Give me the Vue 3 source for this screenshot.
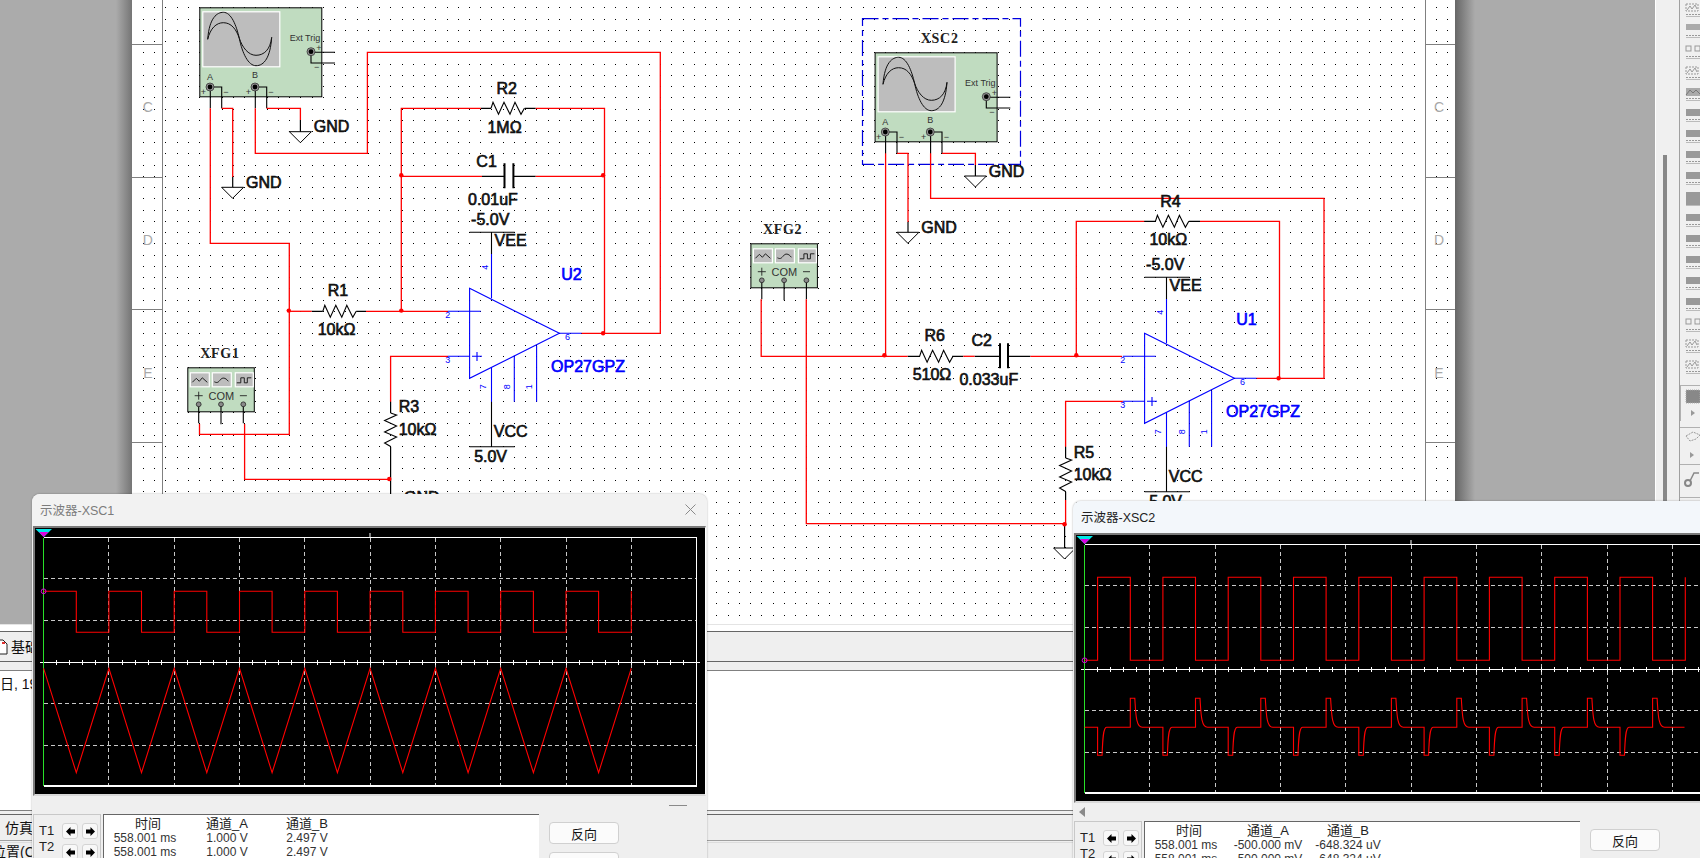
<script setup>
// half a division of the scope grid, every trace edge sits on this step
const STEP = 32.65;
const X0 = 8.6;

function squarePath() {
  let d = `M${X0} 63.3`;
  for (let k = 1; k <= 18; k++) {
    const x = (X0 + k * STEP).toFixed(1);
    if (k === 18) d += ` H${x} V63.3`;
    else d += ` H${x} V${k % 2 ? 104.3 : 63.3}`;
  }
  return d;
}

function trianglePath() {
  let d = `M${X0} 140.3`;
  for (let k = 1; k <= 18; k++) {
    d += ` L${(X0 + k * STEP).toFixed(1)} ${k % 2 ? 244.7 : 140.3}`;
  }
  return d;
}

function pulsePath() {
  let d = `M${X0} 125.3`;
  for (let k = 0; k <= 18; k++) {
    const x = (21.6 + k * STEP).toFixed(1);
    d += ` H${x} V${k % 2 ? 125.3 : 42.3}`;
  }
  return d;
}

function spikePath() {
  let d = `M${X0} 192.3`;
  for (let k = 0; k < 18; k++) {
    const x = 21.6 + k * STEP;
    if (k % 2 === 0) {
      d += ` H${x.toFixed(1)} V220.3 h4.5 C${(x + 5).toFixed(1)} 205 ${(x + 5.5).toFixed(1)} 192.3 ${(x + 9).toFixed(1)} 192.3`;
    } else {
      d += ` H${x.toFixed(1)} V163.3 h4.5 C${(x + 5.5).toFixed(1)} 178 ${(x + 5.5).toFixed(1)} 192.3 ${(x + 12).toFixed(1)} 192.3`;
    }
  }
  return d + ' H608.5';
}

const vGrid = [];
for (let i = 1; i <= 9; i++) vGrid.push((X0 + i * 65.3).toFixed(1));
const hGrid = [50.3, 92.3, 175.3, 217.3];
const ticks = [];
for (let i = 0; i <= 50; i++) ticks.push((X0 + i * 13.06).toFixed(1));

const scopes = [
  {
    id: 'win-one',
    title: '示波器-XSC1',
    traces: [squarePath(), trianglePath()],
    markerY: 63.3,
    rows: [
      ['558.001 ms', '1.000 V', '2.497 V'],
      ['558.001 ms', '1.000 V', '2.497 V'],
    ],
  },
  {
    id: 'win-two',
    title: '示波器-XSC2',
    traces: [pulsePath(), spikePath()],
    markerY: 125.3,
    rows: [
      ['558.001 ms', '-500.000 mV', '-648.324 uV'],
      ['558.001 ms', '-500.000 mV', '-648.324 uV'],
    ],
  },
];

// sheet grid dots
let dots = '';
for (let x = 142.9; x < 1455; x += 11.245) {
  for (let y = 7.3; y < 622; y += 11.245) {
    dots += `M${Math.round(x)} ${Math.round(y) + 0.5}h1`;
  }
}

const sheetTicks = [44.3, 177.3, 309.3, 442.3];
const sheetLetters = [
  { t: 'C', y: 107.3 },
  { t: 'D', y: 240 },
  { t: 'E', y: 372.7 },
];

const redWires = [
  'M210.3 108.3V243.3H289.3V434.3H199.5V424',
  'M221.7 108.3H232.7V177',
  'M255.3 108.3V153.3H367.4V52.3H660.3V333.3H581.7',
  'M266.7 108.3H300.4V120',
  'M289.3 311.3H311.6',
  'M366 311.3H447.8',
  'M401.3 311.3V108.3H480.8',
  'M535.7 108.3H604.5V333.3',
  'M401.3 176.3H482',
  'M535.7 176.3H604.5',
  'M447.8 356.3H390.6V401.7',
  'M244.6 424V479.3H390.6',
  'M885.6 153.3V356.3',
  'M897 153.3H908V222',
  'M930.6 153.3V198.3H1324V378.3H1256.7',
  'M942 153.3H975.4V165',
  'M761.2 299.3V356.3H907.6',
  'M963.4 356.3H974.6',
  'M1030.4 356.3H1121.9',
  'M1076.3 356.3V221.3H1144.2',
  'M1200 221.3H1279.5V378.3',
  'M806.3 299.3V523.7H1064.6',
  'M1122.8 401.3H1065.6V446.7',
  'M1065.6 500V524',
];

const blackWires = [
  'M232.7 177V187.3',
  'M300.4 120V131.7',
  'M975.4 165V176',
  'M908 222V232.3',
  'M390.6 401.7V413M390.6 446.7V494',
  'M1065.6 446.7V458M1065.6 491.7V500',
  'M1064.6 524V548',
  'M311.6 311.3H322.8M356.2 311.3H366',
  'M480.8 108.3H491M524.6 108.3H535.7',
  'M482 176.3H504.5M513.4 176.3H535.7',
  'M907.6 356.3H919.6M952.2 356.3H963.4',
  'M974.6 356.3H1000M1008 356.3H1030.4',
  'M1144.2 221.3H1155.4M1188.8 221.3H1200',
];

const plates = 'M504.5 163.3V188.3M513.4 163.3V188.3M1000 343.3V368.3M1008 343.3V368.3';

const nodes = [
  [288.8, 310.6], [401.3, 310.6], [401.3, 175.3], [603.1, 175.3], [603.1, 333.3], [389.3, 479],
  [884.4, 355.3], [1076.3, 355.3], [1278.6, 378.3], [1064.6, 524.3],
];

const grounds = [
  [232.6, 187.3], [300.4, 131.7], [907.9, 232.3], [975.4, 176], [1064.6, 548], [390.6, 520],
];

const resistors = [
  'translate(322.8 311.3)',
  'translate(491 108.3)',
  'translate(919.6 356.3)',
  'translate(1155.4 221.3)',
  'translate(390.6 413) rotate(90)',
  'translate(1065.6 458) rotate(90)',
];

const labels = [
  { t: 'GND', x: 246, y: 182 },
  { t: 'GND', x: 313.8, y: 126 },
  { t: 'GND', x: 921.3, y: 227 },
  { t: 'GND', x: 988.8, y: 171 },
  { t: 'GND', x: 404, y: 497 },
  { t: 'R1', x: 338, y: 290.7, mid: true },
  { t: '10kΩ', x: 336.6, y: 329.3, mid: true },
  { t: 'R2', x: 506.7, y: 88.3, mid: true },
  { t: '1MΩ', x: 504.5, y: 127, mid: true },
  { t: 'C1', x: 486.6, y: 161, mid: true },
  { t: '0.01uF', x: 492.9, y: 199.3, mid: true },
  { t: 'R3', x: 398.7, y: 406.7 },
  { t: '10kΩ', x: 398.7, y: 429.3 },
  { t: 'R4', x: 1170.5, y: 201, mid: true },
  { t: '10kΩ', x: 1168.3, y: 239.3, mid: true },
  { t: 'R6', x: 934.8, y: 335.7, mid: true },
  { t: '510Ω', x: 932, y: 374.7, mid: true },
  { t: 'C2', x: 981.7, y: 340.7, mid: true },
  { t: '0.033uF', x: 988.8, y: 379, mid: true },
  { t: 'R5', x: 1073.7, y: 452 },
  { t: '10kΩ', x: 1073.7, y: 474.3 },
];

const amps = [
  { at: 'translate(0 0)', name: 'U2' },
  { at: 'translate(675 45)', name: 'U1' },
];
const pinNums = [
  { t: '2', x: 447.8, y: 314.7 },
  { t: '3', x: 447.8, y: 359.7 },
  { t: '6', x: 567.4, y: 337.3 },
];
const pinRotated = [
  { t: '4', x: 485.3, y: 267.3 },
  { t: '7', x: 483, y: 386.7 },
  { t: '8', x: 506.7, y: 386.7 },
  { t: '1', x: 529.5, y: 386.7 },
];

const oscs = ['translate(199.3 7.3)', 'translate(874.6 52.3)'];
const gens = ['translate(187.3 367.3)', 'translate(750.4 243.3)'];

const toolIcons = ['hatch', 'dots', 'boxes', 'hatch', 'wave', 'solid', 'solid', 'solid', 'solid', 'big', 'solid', 'solid', 'solid', 'solid', 'solid', 'boxes', 'hatch', 'hatch'];
</script>

<template>
  <div class="desk">
    <div class="workspace">
      <div class="gutter gutter-left"></div>

      <svg class="sheet" width="1323" height="624" viewBox="132 0 1323 624">
        <rect x="132" y="0" width="1323" height="624" fill="#fff" />
        <path :d="dots" stroke="#000" stroke-width="1" shape-rendering="crispEdges" />

        <g stroke="#808080" stroke-width="1" shape-rendering="crispEdges">
          <line x1="162.5" y1="0" x2="162.5" y2="620" />
          <line x1="1425.5" y1="0" x2="1425.5" y2="620" />
          <template v-for="y in sheetTicks" :key="y">
            <line x1="132" :y1="y" x2="162" :y2="y" />
            <line x1="1426" :y1="y" x2="1455" :y2="y" />
          </template>
        </g>
        <template v-for="l in sheetLetters" :key="l.t">
          <text class="sheet-letter" x="147.8" :y="l.y">{{ l.t }}</text>
          <text class="sheet-letter" x="1439" :y="l.y">{{ l.t }}</text>
        </template>

        <!-- selection box round XSC2 -->
        <rect x="862.5" y="18.7" width="158" height="145.6" fill="none" stroke="#0000e0" stroke-width="1.2" stroke-dasharray="16 4 6 4" />
        <text class="ref-label" x="939.7" y="38.3">XSC2</text>
        <text class="ref-label" x="220" y="353.3">XFG1</text>
        <text class="ref-label" x="782.6" y="229.3">XFG2</text>

        <!-- oscilloscope symbols -->
        <g v-for="o in oscs" :key="o" :transform="o">
          <rect x="0.5" y="0.5" width="122" height="89" fill="#c0dcc0" stroke="#000" stroke-width="1" />
          <rect x="3.5" y="4.5" width="77" height="55" fill="#bdbdbd" stroke="#fff" stroke-width="1.2" />
          <path d="M8.4 32C10 10 18 5 24 5C32 5 37 18 40 31C43 46 49 58.4 56.7 58.4C65 58.4 71 50 72.4 30" fill="none" stroke="#111" stroke-width="1" />
          <path d="M8.4 32C11 21 17 15.4 24 15.4C32 15.4 37 22 40 31C43 40 49 48 56.7 48C65 48 71 42 72.4 30" fill="none" stroke="#111" stroke-width="1" />
          <text class="osc-text" x="105.7" y="30.4">Ext Trig</text>
          <text class="osc-text" x="10.7" y="69.4">A</text>
          <text class="osc-text" x="55.7" y="68">B</text>
          <text class="osc-text" x="119.7" y="41">+</text>
          <text class="osc-text" x="117.4" y="59.7">−</text>
          <text class="osc-text" x="4" y="85">+</text>
          <text class="osc-text" x="26.7" y="85">−</text>
          <text class="osc-text" x="49" y="85">+</text>
          <text class="osc-text" x="71.7" y="85">−</text>
          <path d="M111.7 45H135.7M111.7 45V55.7H135.7M11 79.7V101M11 79.7H22.4V101M56 79.7V101M56 79.7H67.4V101" fill="none" stroke="#000" stroke-width="1.1" />
          <g v-for="c in [[111.7, 44.4], [10.7, 79.7], [55.7, 79.7]]" :key="c[0]">
            <circle :cx="c[0]" :cy="c[1]" r="4" fill="#999" stroke="#333" stroke-width="0.8" />
            <circle :cx="c[0]" :cy="c[1]" r="2.4" fill="#000" />
          </g>
        </g>

        <!-- function generator symbols -->
        <g v-for="g in gens" :key="g" :transform="g">
          <rect x="0.5" y="0.5" width="66.5" height="44" fill="#c0dcc0" stroke="#000" stroke-width="1" />
          <rect x="3" y="5.5" width="19" height="14" fill="#bdbdbd" stroke="#fff" stroke-width="1.2" />
          <rect x="25" y="5.5" width="19" height="14" fill="#bdbdbd" stroke="#fff" stroke-width="1.2" />
          <rect x="48" y="5.5" width="18" height="14" fill="#bdbdbd" stroke="#fff" stroke-width="1.2" />
          <path d="M5 15L9 11L12 14L15 10.5L20 15" fill="none" stroke="#111" stroke-width="0.9" />
          <path d="M27 14.5C30 16 31 15 33 12.5C35 10 38 10 41 14" fill="none" stroke="#111" stroke-width="0.9" />
          <path d="M49.5 15.5H53.5V10.5H57V15.5H60V10.5H64" fill="none" stroke="#111" stroke-width="0.9" />
          <path d="M7.4 28.4H15.4M11.4 24.4V32.4M52.6 28.4H59.6" fill="none" stroke="#222" stroke-width="0.9" />
          <text class="gen-text" x="34" y="28.6">COM</text>
          <path d="M11.4 37V56M33.7 37V57M56 37V56" fill="none" stroke="#000" stroke-width="1.1" />
          <circle v-for="x in [11.4, 33.7, 56]" :key="x" :cx="x" cy="37" r="2.4" fill="#8a8a8a" stroke="#222" stroke-width="0.8" />
        </g>

        <!-- op amps, the second one sits at a fixed offset from the first -->
        <g v-for="a in amps" :key="a.name" :transform="a.at">
          <path d="M491.5 232.3V254M469.6 232.3H514.7M491.5 401.7V446.7M469.6 446.7H514.7" fill="none" stroke="#000" stroke-width="1.1" />
          <path d="M469.6 288.3L559.4 333.3L469.6 378.3Z" fill="none" stroke="#0000ff" stroke-width="1.1" />
          <path d="M491.5 254V298.3M447.8 311.3H480.8M447.8 356.3H469.6M472 356.3H482M477 352V361M559.4 333.3H581.7M491.5 367V401.7M514.3 355.7V401.7M536.6 345.7V401.7" fill="none" stroke="#0000ff" stroke-width="1.1" />
          <text v-for="p in pinNums" :key="p.t" class="pin-num" :x="p.x" :y="p.y">{{ p.t }}</text>
          <text v-for="p in pinRotated" :key="p.t" class="pin-num" :transform="`rotate(-90 ${p.x} ${p.y})`" :x="p.x" :y="p.y">{{ p.t }}</text>
          <text class="part-label" x="571.4" y="274.3">{{ a.name }}</text>
          <text class="part-label" x="588" y="366.7">OP27GPZ</text>
          <text class="sch-text mid" x="490.2" y="219.3">-5.0V</text>
          <text class="sch-text" x="494.6" y="240.7">VEE</text>
          <text class="sch-text" x="493.8" y="431.7">VCC</text>
          <text class="sch-text mid" x="490.6" y="456.7">5.0V</text>
        </g>

        <path v-for="r in resistors" :key="r" :transform="r" d="M0 0L2 -6L7.5 6L13 -6L19 6L24 -6L30 6L33.4 0" fill="none" stroke="#000" stroke-width="1.1" />
        <path v-for="(w, i) in blackWires" :key="'b' + i" :d="w" fill="none" stroke="#000" stroke-width="1.2" />
        <path :d="plates" fill="none" stroke="#000" stroke-width="2" />
        <path v-for="(w, i) in redWires" :key="'r' + i" :d="w" fill="none" stroke="#f00" stroke-width="1.3" />
        <path v-for="g in grounds" :key="g[0]" :d="`M${g[0] - 11} ${g[1]}H${g[0] + 11}L${g[0]} ${g[1] + 11}Z`" fill="#fff" stroke="#000" stroke-width="1" />
        <circle v-for="n in nodes" :key="n[0] + '-' + n[1]" :cx="n[0]" :cy="n[1]" r="2.2" fill="#f00" />
        <text v-for="l in labels" :key="l.t + l.x" class="sch-text" :class="{ mid: l.mid }" :x="l.x" :y="l.y">{{ l.t }}</text>
      </svg>

      <div class="gutter gutter-right"></div>

      <aside class="side-panel">
        <div class="scroll-track"><div class="scroll-thumb"></div></div>
        <div class="tool-column">
          <svg v-for="(t, i) in toolIcons" :key="i" class="tool-icon" width="15" height="14" viewBox="0 0 15 14">
            <rect v-if="t === 'solid'" x="1" y="1" width="14" height="7" fill="#999" />
            <rect v-if="t === 'big'" x="1" y="0" width="14" height="14" fill="#999" />
            <rect v-if="t === 'hatch'" x="1" y="1" width="12" height="7" fill="none" stroke="#999" stroke-dasharray="2 1" />
            <path v-if="t === 'hatch'" d="M2 7L5 3L7 6L10 2L12 6" fill="none" stroke="#999" />
            <rect v-if="t === 'wave'" x="1" y="1" width="14" height="8" fill="#aaa" />
            <path v-if="t === 'wave'" d="M1 8L5 3L8 6L11 3L15 7" fill="none" stroke="#777" />
            <template v-if="t === 'boxes'">
              <rect x="1" y="1" width="5" height="5" fill="none" stroke="#999" />
              <rect x="10" y="1" width="5" height="5" fill="none" stroke="#999" />
            </template>
            <path v-if="t === 'dots'" d="M1 0H15V6H1Z" fill="#aaa" />
            <path d="M1 11.5H15" stroke="#999" stroke-dasharray="2 1" />
            <path d="M1 13.5H15" stroke="#bbb" />
          </svg>
          <div class="tool-big">
            <svg width="15" height="15" viewBox="0 0 15 15">
              <rect x="1" y="1" width="14" height="13" fill="#888" stroke="#aaa" stroke-dasharray="1 1" />
            </svg>
            <span class="tool-arrow"></span>
          </div>
          <div class="tool-big tool-plain">
            <svg width="15" height="15" viewBox="0 0 15 15">
              <path d="M1 5L8 1L15 4L11 8L5 10Z" fill="none" stroke="#999" stroke-dasharray="2 1" />
            </svg>
            <span class="tool-arrow"></span>
          </div>
          <div class="tool-probe">
            <svg width="15" height="18" viewBox="0 0 15 18">
              <circle cx="4" cy="13" r="3" fill="none" stroke="#888" stroke-width="2" />
              <path d="M6 11L10 3H15" fill="none" stroke="#888" stroke-width="1.5" />
            </svg>
          </div>
        </div>
      </aside>
    </div>

    <div class="dock">
      <div class="dock-gap"></div>
      <div class="dock-tabs">
        <svg class="doc-icon" width="8" height="16" viewBox="0 0 8 16">
          <path d="M-3 1H3L7 5V15H-3Z" fill="#fff" stroke="#222" />
          <path d="M2 3H5V5H2Z" fill="#e03030" />
        </svg>
        <span>基础</span>
      </div>
      <div class="dock-spacer"></div>
      <div class="dock-log">日, 19</div>
      <div class="dock-thin"></div>
      <div class="dock-tabs dock-sim"><span>仿真</span></div>
      <div class="dock-last"><span>位置(C</span></div>
    </div>

    <section v-for="s in scopes" :key="s.id" class="scope-window" :class="s.id">
      <header class="scope-title">
        <span>{{ s.title }}</span>
        <svg class="close-x" width="11" height="11" viewBox="0 0 11 11">
          <path d="M0.5 0.5L10.5 10.5M10.5 0.5L0.5 10.5" stroke="currentColor" stroke-width="1" />
        </svg>
      </header>

      <div class="scope-screen">
        <svg width="670" height="266" viewBox="0 0 670 266">
          <g stroke="#c8c8c8" stroke-width="1" stroke-dasharray="4 3" shape-rendering="crispEdges">
            <line v-for="x in vGrid" :key="x" :x1="x" y1="9.7" :x2="x" y2="258" />
            <line v-for="y in hGrid" :key="y" x1="8.6" :y1="y" x2="661" :y2="y" />
          </g>
          <line x1="335" y1="5" x2="335" y2="10" stroke="#fff" />
          <g stroke="#fff" stroke-width="1" shape-rendering="crispEdges">
            <line x1="5.4" y1="134.5" x2="664.7" y2="134.5" />
            <line v-for="x in ticks" :key="x" :x1="x" y1="132" :x2="x" y2="137" />
          </g>
          <path d="M8.6 9.7H661.5V258H8.6" fill="none" stroke="#fff" stroke-width="1.2" shape-rendering="crispEdges" />
          <line x1="8.6" y1="9.7" x2="8.6" y2="258" stroke="#28e028" stroke-width="1" shape-rendering="crispEdges" />
          <path v-for="(t, i) in s.traces" :key="i" :d="t" fill="none" stroke="#f00" stroke-width="1.1" />
          <path d="M0.5 1H17L8.7 9Z" fill="#00e8e8" />
          <path d="M4 4H13.5L8.7 9Z" fill="#e000e0" />
          <circle cx="8.6" :cy="s.markerY" r="2.4" fill="none" stroke="#e000e0" stroke-width="1" />
        </svg>
      </div>

      <div class="scope-strip">
        <span v-if="s.id === 'win-one'" class="strip-dash"></span>
        <span v-else class="strip-arrow"></span>
      </div>

      <div class="scope-controls">
        <div class="cursor-box">
          <div class="cursor-names"><span>T1</span><span>T2</span></div>
          <div class="cursor-buttons">
            <button v-for="b in ['l1', 'r1', 'l2', 'r2']" :key="b" class="arrow-btn">
              <svg width="9" height="9" viewBox="0 0 9 9">
                <path v-if="b[0] === 'l'" d="M0 4.5L4.5 0V2.5H9V6.5H4.5V9Z" fill="#000" />
                <path v-else d="M9 4.5L4.5 0V2.5H0V6.5H4.5V9Z" fill="#000" />
              </svg>
            </button>
          </div>
        </div>
        <div class="readout">
          <div class="readout-row readout-head">
            <span class="first">时间</span><span>通道_A</span><span>通道_B</span>
          </div>
          <div v-for="(r, i) in s.rows" :key="i" class="readout-row">
            <span v-for="c in r" :key="c">{{ c }}</span>
          </div>
        </div>
        <div class="scope-buttons">
          <button class="flat-btn">反向</button>
          <button class="flat-btn"></button>
        </div>
      </div>
    </section>
  </div>
</template>

<style>
html, body {
  margin: 0;
  overflow: hidden;
}
</style>

<style scoped>
.desk {
  position: relative;
  width: 1700px;
  height: 858px;
  overflow: hidden;
  display: flex;
  flex-direction: column;
  font-family: "Liberation Sans", "Noto Sans CJK SC", sans-serif;
  background: #efefef;
}

.workspace {
  height: 624px;
  display: flex;
  background: #ababab;
}

.gutter {
  height: 100%;
}

.gutter-left {
  width: 132px;
  background: linear-gradient(to right, #ababab 0, #ababab 116px, #757575 132px);
}

.gutter-right {
  width: 200px;
  background: linear-gradient(to right, #666 0, #ababab 20px);
}

.sheet {
  display: block;
  flex: none;
}

.sheet-letter {
  font-size: 14px;
  fill: #a8a8a8;
  text-anchor: middle;
  dominant-baseline: central;
}

.ref-label {
  font-family: "Liberation Serif", serif;
  font-size: 14px;
  font-weight: 700;
  letter-spacing: 0.7px;
  fill: #222;
  text-anchor: middle;
  dominant-baseline: central;
}

.osc-text {
  font-size: 9px;
  fill: #333;
  text-anchor: middle;
  dominant-baseline: central;
}

.gen-text {
  font-size: 11px;
  fill: #333;
  text-anchor: middle;
  dominant-baseline: central;
}

.pin-num {
  font-size: 9px;
  fill: #0000ff;
  text-anchor: middle;
  dominant-baseline: central;
}

/* the labels in the reference are scaled up and look half bold, hence the thin stroke */
.part-label {
  font-size: 16px;
  fill: #0000ff;
  stroke: #0000ff;
  stroke-width: 0.65px;
  text-anchor: middle;
  dominant-baseline: central;
}

.sch-text {
  font-size: 16px;
  fill: #111;
  stroke: #111;
  stroke-width: 0.65px;
  dominant-baseline: central;
}

.sch-text.mid {
  text-anchor: middle;
}

.side-panel {
  flex: 1;
  display: flex;
  background: #f0f0f0;
  border-left: 1px solid #fff;
}

.scroll-track {
  width: 23px;
  border-right: 1px solid #a0a0a0;
}

.scroll-thumb {
  width: 4px;
  height: 470px;
  margin: 155px 0 0 7px;
  background: #888;
}

.tool-column {
  display: flex;
  flex-direction: column;
  padding-top: 3px;
  width: 20px;
}

.tool-icon {
  display: block;
  flex: none;
  margin: 0 0 7px 5px;
}

.tool-big {
  display: flex;
  flex-direction: column;
  align-items: center;
  gap: 6px;
  height: 32px;
  margin-top: 4px;
  padding: 3px 0 0 4px;
  border-top: 1px solid #b0b0b0;
  border-left: 1px solid #b0b0b0;
}

.tool-plain {
  border-left: none;
  margin-top: 6px;
  height: 30px;
}

.tool-arrow {
  width: 0;
  height: 0;
  border-left: 4px solid #999;
  border-top: 3px solid transparent;
  border-bottom: 3px solid transparent;
}

.tool-probe {
  height: 27px;
  margin-top: 3px;
  padding: 5px 0 0 4px;
  border-top: 1px solid #b0b0b0;
  border-bottom: 1px solid #b0b0b0;
}

.dock {
  flex: 1;
  display: flex;
  flex-direction: column;
  font-size: 14px;
  color: #111;
}

.dock-gap {
  height: 7px;
  background: #fff;
  border-top: 1px solid #e4e4e4;
  box-sizing: border-box;
}

.dock-tabs {
  height: 31px;
  box-sizing: border-box;
  border-top: 1px solid #666;
  border-bottom: 1px solid #666;
  display: flex;
  align-items: center;
  gap: 3px;
  background: #efefef;
}

.dock-tabs span {
  line-height: 1;
}

.doc-icon {
  display: block;
}

.dock-spacer {
  height: 8px;
  border-bottom: 1px solid #808080;
}

.dock-log {
  height: 139px;
  background: #fff;
  padding-top: 5px;
  box-sizing: border-box;
  line-height: 17px;
  font-size: 14px;
}

.dock-thin {
  height: 4px;
  border-top: 1px solid #808080;
  box-sizing: border-box;
}

.dock-sim {
  height: 27px;
  border-bottom: 1px solid #a0a0a0;
  padding-left: 5px;
}

.dock-last {
  flex: 1;
  border-top: 1px solid #ddd;
  margin-top: 1px;
  overflow: hidden;
  line-height: 17px;
  white-space: nowrap;
  padding-top: 1px;
}

.dock-last span {
  margin-left: -8px;
  display: inline-block;
}

/* the two scope windows float over the workspace like desktop windows */
.scope-window {
  position: absolute;
  width: 675px;
  height: 400px;
  box-sizing: border-box;
  padding: 0 1px;
  background: #efefef;
  border-radius: 8px 8px 0 0;
  box-shadow: 0 0 2px rgba(0, 0, 0, 0.35);
}

.win-one {
  left: 32px;
  top: 494px;
}

.win-two {
  left: 1073px;
  top: 501px;
}

.scope-title {
  height: 32px;
  box-sizing: border-box;
  display: flex;
  align-items: center;
  justify-content: space-between;
  padding: 0 11px 2px 8px;
  font-size: 12.5px;
  color: #7c7c7c;
  background: #f2f2f2;
  border-radius: 8px 8px 0 0;
  margin: 0 -1px;
}

.win-two .scope-title {
  background: #f3f7fb;
  color: #222;
}

.close-x {
  color: #8a8a8a;
  display: block;
}

.scope-screen {
  height: 266px;
  width: 670px;
  background: #000;
  border-top: 2px solid #7a7a7a;
  border-left: 2px solid #7a7a7a;
  border-right: 1px solid #fff;
  border-bottom: 2px solid #d8d8d8;
  line-height: 0;
}

.scope-screen svg {
  display: block;
}

.scope-strip {
  height: 18px;
  display: flex;
  align-items: center;
}

.strip-dash {
  width: 18px;
  height: 1px;
  background: #8a8a8a;
  margin-left: 636px;
}

.strip-arrow {
  width: 0;
  height: 0;
  margin-left: 5px;
  border-right: 6px solid #8a8a8a;
  border-top: 5px solid transparent;
  border-bottom: 5px solid transparent;
}

.scope-controls {
  display: flex;
  align-items: flex-start;
}

.cursor-box {
  width: 68px;
  height: 60px;
  box-sizing: border-box;
  display: flex;
  border-top: 1px solid #c8c8c8;
  border-left: 1px solid #c8c8c8;
  border-right: 1px solid #c8c8c8;
}

.cursor-names {
  width: 28px;
  padding: 8px 0 0 5px;
  box-sizing: border-box;
  display: flex;
  flex-direction: column;
  font-size: 13px;
  line-height: 16px;
  color: #222;
}

.cursor-buttons {
  display: grid;
  grid-template-columns: 16px 16px;
  grid-auto-rows: 16px;
  column-gap: 4px;
  row-gap: 5px;
  margin-top: 8px;
}

.arrow-btn {
  padding: 0;
  margin: 0;
  width: 16px;
  height: 16px;
  display: flex;
  align-items: center;
  justify-content: center;
  background: #f8f8f8;
  border: 1px solid #d4d4d4;
  border-radius: 3px;
}

.readout {
  width: 436px;
  height: 60px;
  margin-left: 2px;
  box-sizing: border-box;
  padding-top: 2px;
  background: #fff;
  border-top: 1px solid #666;
  border-left: 1px solid #666;
  font-size: 12px;
  color: #333;
}

.readout-row {
  display: grid;
  grid-template-columns: 82px 82px 78px;
  line-height: 14px;
  text-align: center;
  white-space: nowrap;
}

.readout-head {
  font-size: 13px;
  color: #222;
}

.readout-head .first {
  padding-left: 6px;
}

.scope-buttons {
  display: flex;
  flex-direction: column;
  gap: 8px;
  margin: 8px 0 0 10px;
}

.flat-btn {
  width: 70px;
  height: 22px;
  padding: 0;
  font-family: inherit;
  font-size: 13px;
  color: #111;
  background: #fbfbfb;
  border: 1px solid #d0d0d0;
  border-radius: 4px;
}
</style>
